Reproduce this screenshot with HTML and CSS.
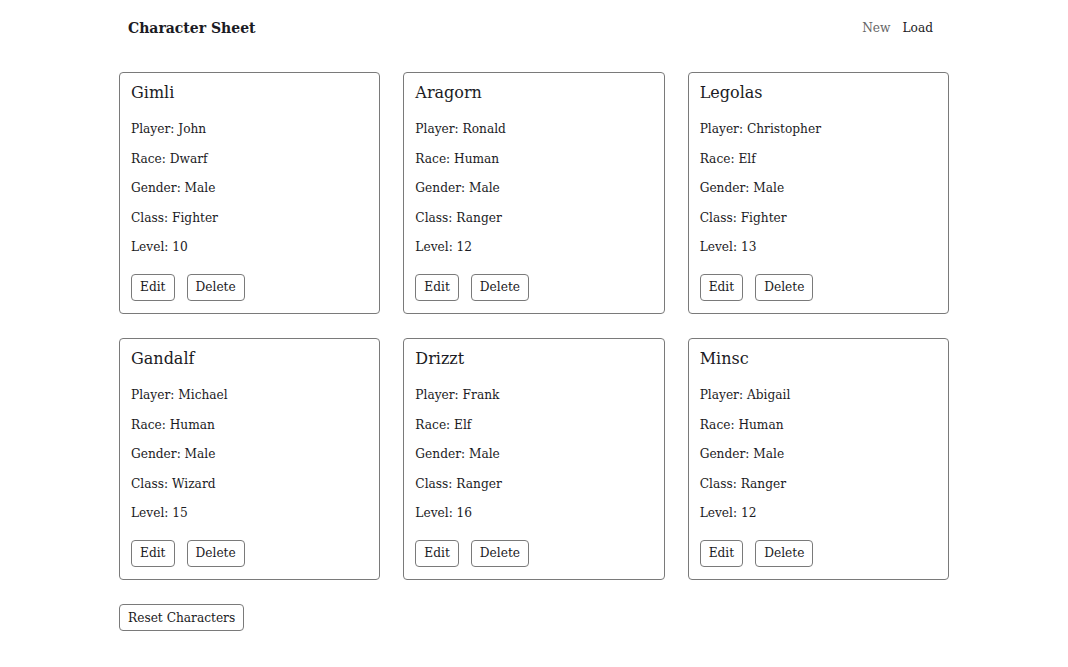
FILE: index.html
```html
<!DOCTYPE html>
<html>
<head>
<meta charset="utf-8">
<link rel="stylesheet" href="styles.css">
</head>
<body>
<div class="page">
  <header class="header">
    <h1 class="title">Character Sheet</h1>
    <nav class="nav">
      <a class="nav-link muted">New</a>
      <a class="nav-link">Load</a>
    </nav>
  </header>
  <main class="grid">
    <section class="card">
      <h2 class="name">Gimli</h2>
      <p class="row">Player: John</p>
      <p class="row">Race: Dwarf</p>
      <p class="row">Gender: Male</p>
      <p class="row">Class: Fighter</p>
      <p class="row">Level: 10</p>
      <div class="actions"><button class="btn">Edit</button><button class="btn">Delete</button></div>
    </section>
    <section class="card">
      <h2 class="name">Aragorn</h2>
      <p class="row">Player: Ronald</p>
      <p class="row">Race: Human</p>
      <p class="row">Gender: Male</p>
      <p class="row">Class: Ranger</p>
      <p class="row">Level: 12</p>
      <div class="actions"><button class="btn">Edit</button><button class="btn">Delete</button></div>
    </section>
    <section class="card">
      <h2 class="name">Legolas</h2>
      <p class="row">Player: Christopher</p>
      <p class="row">Race: Elf</p>
      <p class="row">Gender: Male</p>
      <p class="row">Class: Fighter</p>
      <p class="row">Level: 13</p>
      <div class="actions"><button class="btn">Edit</button><button class="btn">Delete</button></div>
    </section>
    <section class="card">
      <h2 class="name">Gandalf</h2>
      <p class="row">Player: Michael</p>
      <p class="row">Race: Human</p>
      <p class="row">Gender: Male</p>
      <p class="row">Class: Wizard</p>
      <p class="row">Level: 15</p>
      <div class="actions"><button class="btn">Edit</button><button class="btn">Delete</button></div>
    </section>
    <section class="card">
      <h2 class="name">Drizzt</h2>
      <p class="row">Player: Frank</p>
      <p class="row">Race: Elf</p>
      <p class="row">Gender: Male</p>
      <p class="row">Class: Ranger</p>
      <p class="row">Level: 16</p>
      <div class="actions"><button class="btn">Edit</button><button class="btn">Delete</button></div>
    </section>
    <section class="card">
      <h2 class="name">Minsc</h2>
      <p class="row">Player: Abigail</p>
      <p class="row">Race: Human</p>
      <p class="row">Gender: Male</p>
      <p class="row">Class: Ranger</p>
      <p class="row">Level: 12</p>
      <div class="actions"><button class="btn">Edit</button><button class="btn">Delete</button></div>
    </section>
  </main>
  <div class="footer">
    <button class="btn">Reset Characters</button>
  </div>
</div>
</body>
</html>
```

FILE: styles.css
```css
* { box-sizing: border-box; }
html, body { margin: 0; padding: 0; background: #fff; }
body {
  font-family: "DejaVu Serif", "Liberation Serif", serif;
  color: #1b1b24;
  font-size: 12.2px;
}
.page {
  width: 830px;
  margin: 0 auto;
}
.header {
  display: flex;
  justify-content: space-between;
  align-items: center;
  height: 56px;
  padding: 0 16px 0 9px;
}
.title {
  margin: 0;
  font-size: 14px;
  font-weight: bold;
}
.nav { display: flex; gap: 12px; }
.nav-link { font-size: 12.2px; color: #1b1b24; }
.nav-link.muted { color: #666; }
.grid {
  margin-top: 16px;
  display: grid;
  grid-template-columns: repeat(3, 1fr);
  gap: 24px 23px;
}
.card {
  border: 1px solid #7a7a7a;
  border-radius: 4px;
  padding: 10px 12px 11px 11px;
  height: 242px;
}
.name {
  margin: 0 0 12px;
  font-size: 16px;
  font-weight: normal;
  line-height: 20px;
}
.row {
  margin: 0;
  line-height: 29.6px;
}
.actions {
  display: flex;
  gap: 12px;
  margin-top: 11px;
}
.btn {
  font-family: inherit;
  font-size: 12.2px;
  color: #1b1b24;
  background: #fff;
  border: 1px solid #7a7a7a;
  border-radius: 4px;
  height: 27px;
  padding: 0 8px;
}
.footer { margin-top: 24px; }
```
